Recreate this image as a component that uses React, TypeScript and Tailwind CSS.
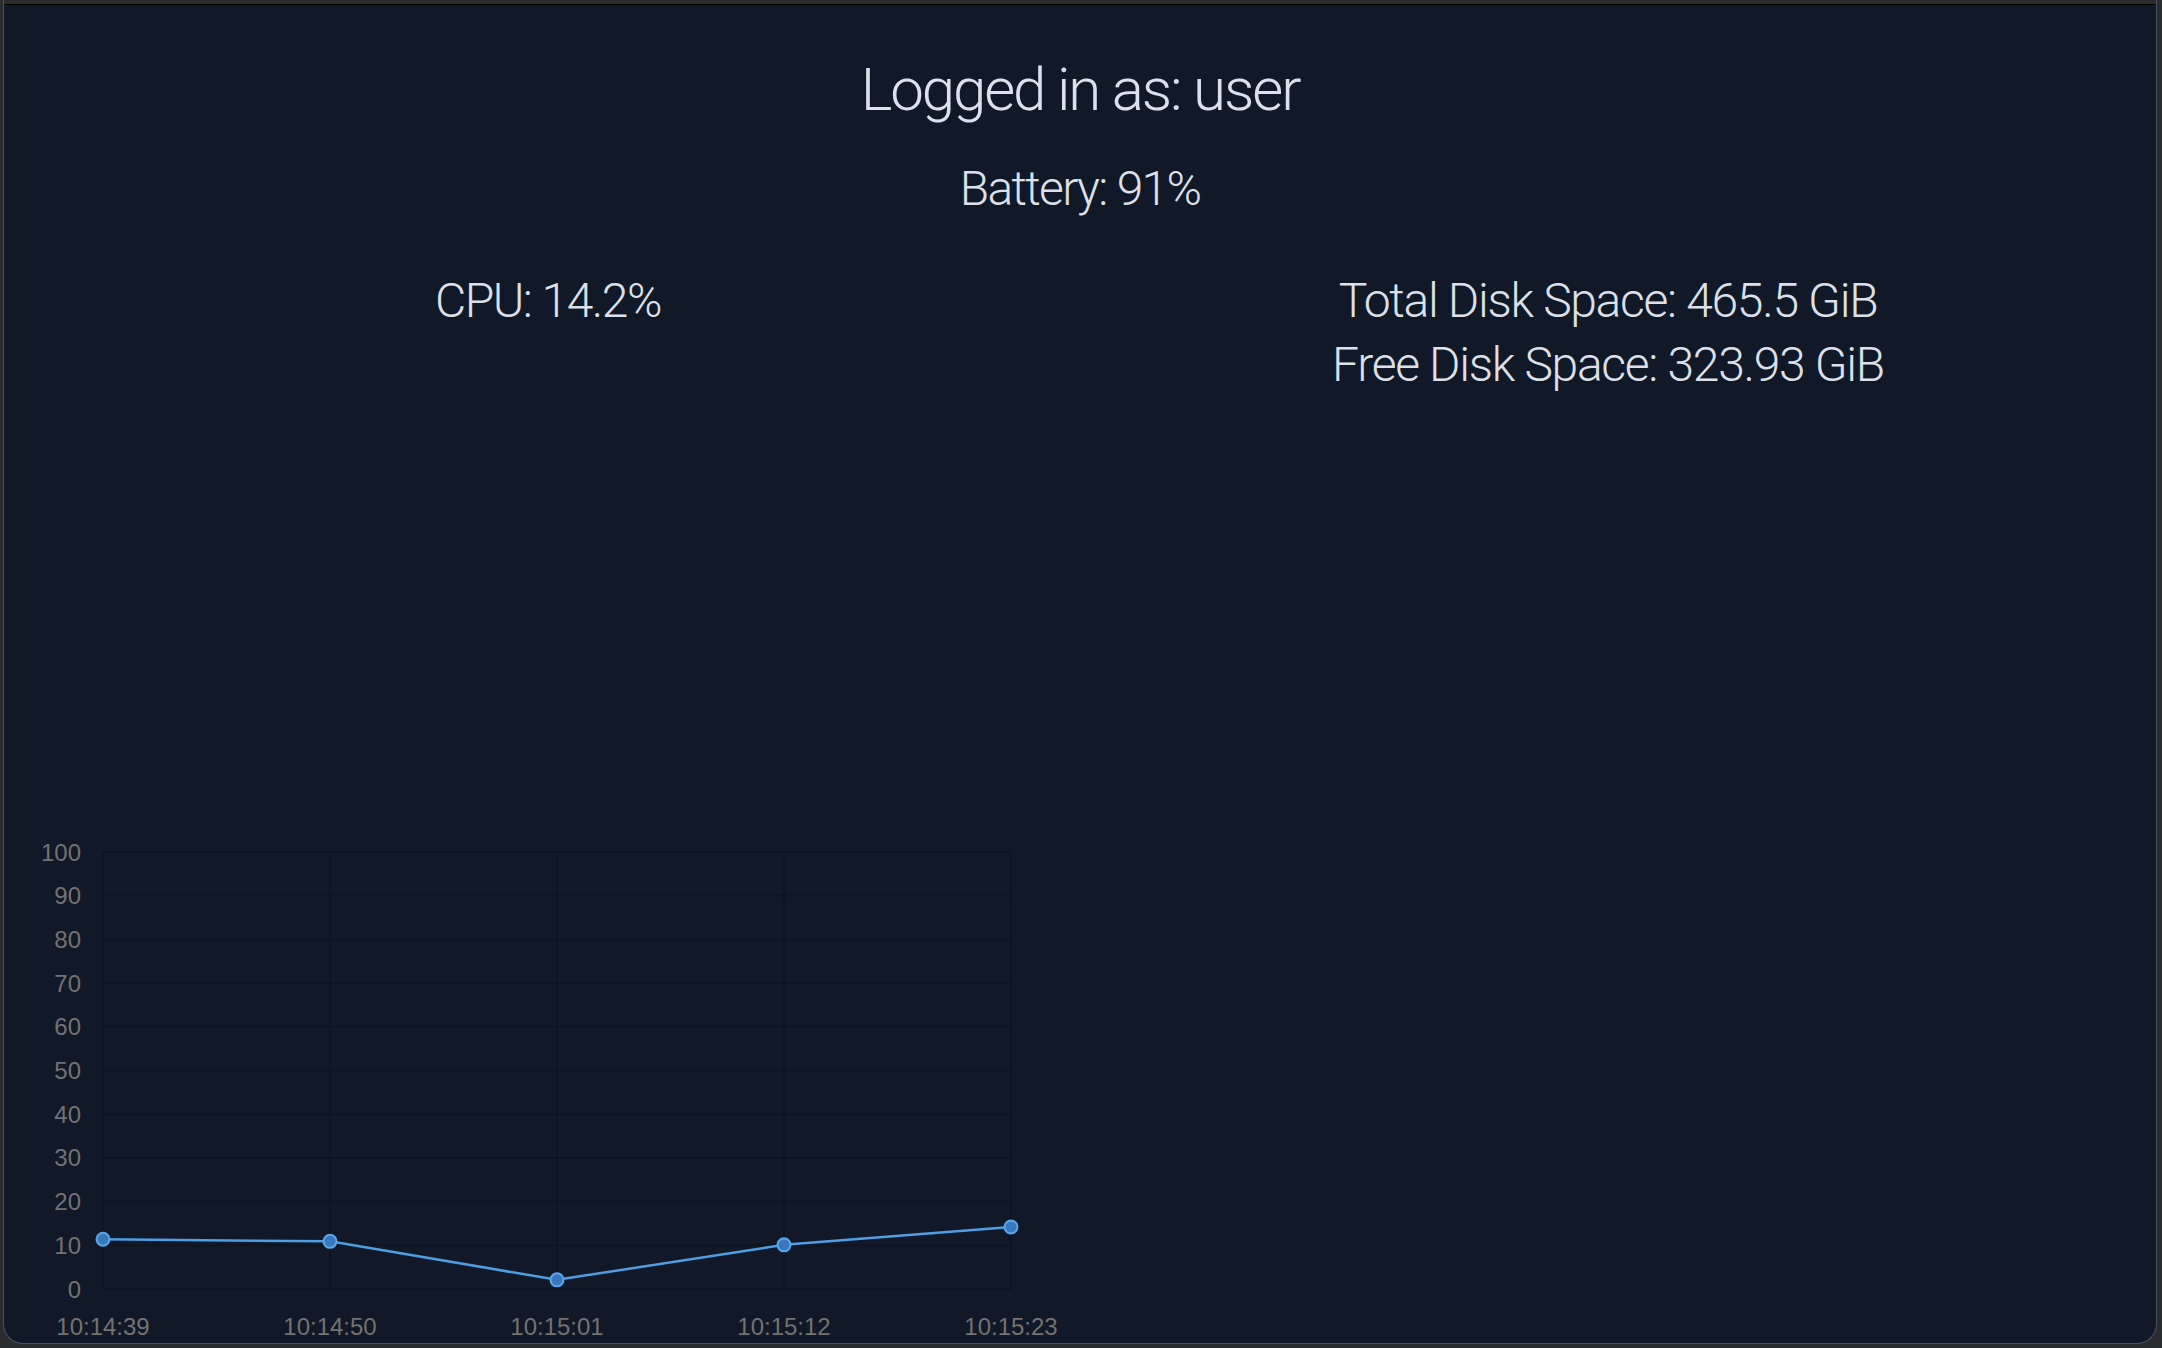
import React from "react";

type Sample = { time: string; value: number };

const samples: Sample[] = [
  { time: "10:14:39", value: 11.4 },
  { time: "10:14:50", value: 10.9 },
  { time: "10:15:01", value: 2.1 },
  { time: "10:15:12", value: 10.1 },
  { time: "10:15:23", value: 14.2 },
];

// plot geometry (svg px)
const LEFT = 99;
const STEP = 227;
const TOP = 24;
const BOTTOM = 461;
const yFor = (v: number) => BOTTOM - ((BOTTOM - TOP) * v) / 100;

function CpuChart() {
  const ticks = [0, 10, 20, 30, 40, 50, 60, 70, 80, 90, 100];
  const right = LEFT + STEP * (samples.length - 1);
  const points = samples.map((s, i) => `${LEFT + i * STEP},${yFor(s.value)}`).join(" ");

  return (
    <svg width={1100} height={515} className="block shrink-0 tracking-normal">
      {ticks.map((t) => (
        <g key={t}>
          <line
            x1={LEFT}
            x2={right}
            y1={yFor(t)}
            y2={yFor(t)}
            stroke="rgba(0,0,0,0.12)"
            strokeWidth={2}
          />
          <text
            x={77}
            y={yFor(t) + 8.5}
            textAnchor="end"
            fontFamily="'Liberation Sans', Arial, sans-serif"
            fontSize={24}
            fill="#727272"
          >
            {t}
          </text>
        </g>
      ))}
      {samples.map((s, i) => (
        <g key={s.time}>
          <line
            x1={LEFT + i * STEP}
            x2={LEFT + i * STEP}
            y1={TOP}
            y2={BOTTOM}
            stroke="rgba(0,0,0,0.12)"
            strokeWidth={2}
          />
          <text
            x={LEFT + i * STEP}
            y={507}
            textAnchor="middle"
            fontFamily="'Liberation Sans', Arial, sans-serif"
            fontSize={24}
            fill="#727272"
          >
            {s.time}
          </text>
        </g>
      ))}
      <polyline points={points} fill="none" stroke="#4f9ee3" strokeWidth={2.5} />
      {samples.map((s, i) => (
        <circle
          key={i}
          cx={LEFT + i * STEP}
          cy={yFor(s.value)}
          r={6.5}
          fill="#3a78bd"
          stroke="#5aa6ea"
          strokeWidth={2}
        />
      ))}
    </svg>
  );
}

export default function App() {
  return (
    <div className="h-[1348px] w-[2162px] overflow-hidden bg-[#2a2b2e]">
      <div className="ml-[3px] flex h-[1344px] w-[2154px] flex-col overflow-hidden rounded-b-[20px] border border-t-0 border-[#4a5060] bg-[#111827] text-[#dbe0ea] font-['Roboto',sans-serif] font-light">
        <div className="h-[5px] shrink-0 border-b border-black bg-[#2b2b2b]" />
        <div className="pt-[49px] text-center text-[60px] leading-[72px] tracking-[-0.035em]">Logged in as: user</div>
        <div className="mt-[31px] text-center text-[48px] leading-[64px] tracking-[-0.035em]">Battery: 91%</div>
        <div className="mt-[48px] grid grid-cols-2 pl-[14px] pr-[18px] text-center text-[48px] leading-[64px]">
          <div className="tracking-[-0.031em]">CPU: 14.2%</div>
          <div className="tracking-[-0.027em]">
            <div>Total Disk Space: 465.5 GiB</div>
            <div>Free Disk Space: 323.93 GiB</div>
          </div>
        </div>
        <div className="flex-1" />
        <CpuChart />
      </div>
    </div>
  );
}
